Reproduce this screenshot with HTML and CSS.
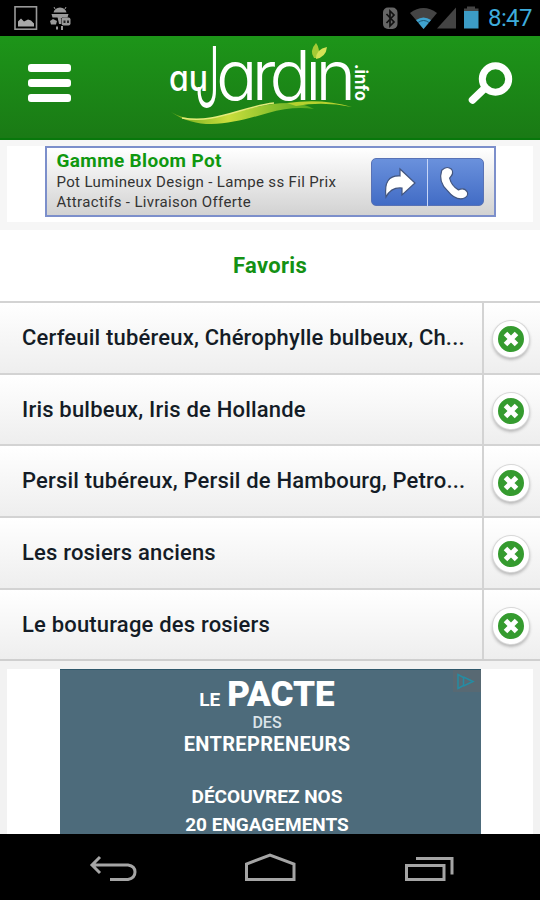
FILE: index.html
```html
<!DOCTYPE html>
<html lang="fr">
<head>
  <meta charset="UTF-8" />
  <meta name="viewport" content="width=device-width, initial-scale=1.0"/>
  <title>Favoris - auJardin.info</title>
  <link rel="stylesheet" href="styles.css">
</head>
<body>
  <div class="status-bar">
    <svg class="status-left" width="72" height="36" viewBox="0 0 72 36">
      <rect x="15" y="6.8" width="21.5" height="22.4" fill="none" stroke="#999" stroke-width="1.6"/>
      <path d="M18 26.500v-5l3-3 3 3 4-2 3 1 3 3v3z" fill="#aaa"/>
      <g fill="#999">
        <path d="M53.500 12.500q1-4.500 6.500-5 5.500 .5 6.500 5z"/>
        <path d="M51.500 14h17l-1 3.500h-5l-4 3-1-3h-5z"/>
        <path d="M55 9l-1-2M65 9l1-2" stroke="#999"/>
        <rect x="61.500" y="17.500" width="9" height="8" rx="2"/>
        <path d="M50 21l3-2 4 2-1 3.500h-5zM58 19h3v5h-2zM56 26.500h2v3h-2zM61 26h2v4h-2z"/>
      </g>
      <path d="M63.500 20.500h2V23h-2zM67 20.500h2V23h-2z" fill="#222"/>
    </svg>
    <svg class="status-right" width="104" height="36" viewBox="382 0 104 36">
      <rect x="383" y="7.500" width="14.500" height="21.500" rx="5" fill="#666"/>
      <path d="M386.500 14l7.500 8-4 4V11l4 4-7.500 8" fill="none" stroke="#111" stroke-width="1.700"/>
      <path d="M410 13q13.500-10 27 0l-13.300 16z" fill="#444"/>
      <path d="M416 20q7.500-5 15 0l-7.500 9z" fill="#3fa3cf"/>
      <path d="M418 22.500q5.500-4 11 0" fill="none" stroke="#1c5875" stroke-width="1"/>
      <path d="M456 7.500V28.500H437z" fill="#444"/>
      <path d="M464 11V8.500h3V6.500h8v2h3.500V11z" fill="#444"/>
      <rect x="464" y="11" width="14.500" height="17.500" fill="#3c9cc6"/>
    </svg>
    <span class="clock">8:47</span>
  </div>

  <header class="header">
    <div class="menu-button"><span></span><span></span><span></span></div>
    <svg class="logo" width="204" height="96" viewBox="168 40 204 96">
      <defs>
        <linearGradient id="swoosh" x1="0" x2="1">
          <stop offset="0" stop-color="#6aa71b"/>
          <stop offset=".4" stop-color="#cade3c"/>
          <stop offset="1" stop-color="#4fa71f"/>
        </linearGradient>
      </defs>
      <g class="logo-text">
        <text class="logo-au" x="170" y="92" textLength="39" lengthAdjust="spacingAndGlyphs">au</text>
        <text class="logo-j" x="196" y="108" textLength="25" lengthAdjust="spacingAndGlyphs">J</text>
        <text class="logo-name" x="217" y="100.500" textLength="140" lengthAdjust="spacing">ardın</text>
        <text class="logo-info" transform="translate(355.500 65) rotate(90)" textLength="37" lengthAdjust="spacingAndGlyphs">.info</text>
      </g>
      <path d="M315 59q-5-7 2-15 4 5 3 15z" fill="#a4cb35"/>
      <path d="M317 60q0-10 11-12-1 10-11 12z" fill="#d5e256"/>
      <path d="M172 113q18 11 45 5c24-5 49-15 77-14q12 1 21 6-22-3-46 4c-32 9-67 20-97-1z" fill="url(#swoosh)"/>
      <path d="M183 119c34 6 58-11 92-15" fill="none" stroke="#e4ec7a" stroke-width="1.500"/>
      <path d="M288 104q35-5 65 4-29-6-56-1z" fill="#b5d12f"/>
    </svg>
    <svg class="search" width="48" height="48" viewBox="466 59 48 48">
      <circle cx="495.500" cy="79" r="13.200" fill="none" stroke="#fff" stroke-width="7"/>
      <path d="M485 88L472.500 100" stroke="#fff" stroke-width="7.500" stroke-linecap="round"/>
    </svg>
  </header>

  <section class="top-ad">
    <div class="top-ad-inner">
      <div class="text-ad">
        <div class="text-ad-copy">
          <div class="text-ad-title">Gamme Bloom Pot</div>
          <div class="text-ad-line">Pot Lumineux Design - Lampe ss Fil Prix</div>
          <div class="text-ad-line">Attractifs - Livraison Offerte</div>
        </div>
        <div class="text-ad-buttons">
          <svg width="55" height="48" viewBox="0 0 55 48">
            <path d="M14 38q-3-22 14-21v-7l15 14-13 12v-7q-11-1-16 9z" fill="#fff" stroke="#42557f" stroke-width="1.200"/>
          </svg>
          <svg width="55" height="48" viewBox="0 0 55 48">
            <path d="M14 11q5-5 10-1 3 4-2 9 2 8 9 12 6-3 9 2 2 5-5 7-8 1-15-8-10-9-6-21z" fill="#fff" stroke="#42557f" stroke-width="1.200"/>
          </svg>
        </div>
      </div>
    </div>
  </section>

  <h1 class="title">Favoris</h1>

  <ul class="favorites">
    <li class="favorite">
      <span class="favorite-name">Cerfeuil tubéreux, Chérophylle bulbeux, Ch...</span>
      <span class="remove"><svg width="26" height="26" viewBox="0 0 26 26"><path d="M7.500 7.500l11 11M18.500 7.500l-11 11"/></svg></span>
    </li>
    <li class="favorite">
      <span class="favorite-name">Iris bulbeux, Iris de Hollande</span>
      <span class="remove"><svg width="26" height="26" viewBox="0 0 26 26"><path d="M7.500 7.500l11 11M18.500 7.500l-11 11"/></svg></span>
    </li>
    <li class="favorite">
      <span class="favorite-name">Persil tubéreux, Persil de Hambourg, Petro...</span>
      <span class="remove"><svg width="26" height="26" viewBox="0 0 26 26"><path d="M7.500 7.500l11 11M18.500 7.500l-11 11"/></svg></span>
    </li>
    <li class="favorite">
      <span class="favorite-name">Les rosiers anciens</span>
      <span class="remove"><svg width="26" height="26" viewBox="0 0 26 26"><path d="M7.500 7.500l11 11M18.500 7.500l-11 11"/></svg></span>
    </li>
    <li class="favorite">
      <span class="favorite-name">Le bouturage des rosiers</span>
      <span class="remove"><svg width="26" height="26" viewBox="0 0 26 26"><path d="M7.500 7.500l11 11M18.500 7.500l-11 11"/></svg></span>
    </li>
  </ul>

  <section class="bottom-ad">
    <div class="bottom-ad-inner">
      <div class="banner">
        <div class="banner-main"><span class="banner-le">LE</span><span class="banner-pacte">PACTE</span></div>
        <div class="banner-des">DES</div>
        <div class="banner-ent">ENTREPRENEURS</div>
        <div class="banner-more">DÉCOUVREZ NOS</div>
        <div class="banner-more">20 ENGAGEMENTS</div>
        <svg class="ad-choices" width="28" height="22" viewBox="0 0 28 22">
          <path d="M5 4.500v14l5.500-3V7.500zM10.500 7L20 11.500 10.500 16" fill="none" stroke="#258ca3" stroke-width="1.500"/>
        </svg>
      </div>
    </div>
  </section>

  <nav class="nav-bar">
    <svg width="540" height="66" viewBox="0 834 540 66" fill="none" stroke="#a5a5a5" stroke-width="3">
      <path d="M100 857l-8 8 8 8M92 865h36q7 1 7 7t-7 7.500h-18"/>
      <path d="M246.500 879.500v-15.500l23.500-9 24 9v15.500z"/>
      <path d="M406.500 865.500h37.500v14h-37.500zM416 858.500h36v16"/>
    </svg>
  </nav>
</body>
</html>
```

FILE: styles.css
```css
* {
  box-sizing: border-box;
}

body {
  margin: 0;
  width: 540px;
  height: 900px;
  overflow: hidden;
  display: flex;
  flex-direction: column;
  font-family: Roboto, "Liberation Sans", sans-serif;
  background: #f2f2f2;
}

svg {
  display: block;
}

.status-bar {
  height: 36px;
  flex: none;
  display: flex;
  align-items: center;
  background: #000;
}

.status-right {
  margin-left: auto;
}

.clock {
  width: 54px;
  padding-left: 2px;
  font-size: 24px;
  line-height: 36px;
  color: #3eacdc;
  letter-spacing: -0.6px;
}

.header {
  height: 104px;
  flex: none;
  display: flex;
  align-items: center;
  justify-content: space-between;
  padding: 0 26px 0 28px;
  background: linear-gradient(#1d9519, #1a7a15);
  border-bottom: 2px solid #08780b;
}

.menu-button {
  width: 43px;
  margin-top: -8px;
  display: flex;
  flex-direction: column;
  gap: 7px;
}

.menu-button span {
  height: 8px;
  border-radius: 3px;
  background: #fff;
}

.logo {
  margin-left: 71px;
  margin-right: 70px;
  overflow: visible;
}

.logo-text {
  fill: #fff;
  font-family: Inter, Lato, sans-serif;
  font-feature-settings: "cv11";
}

.logo-au {
  font-size: 36px;
  font-weight: 500;
}

.logo-j {
  font-size: 84px;
  font-weight: 300;
}

.logo-name {
  font-size: 69px;
  font-weight: 300;
}

.logo-info {
  font-size: 17px;
  font-weight: 700;
}

.search {
  margin-top: -8px;
}

.top-ad {
  height: 90px;
  flex: none;
  padding: 6px 7px 8px;
  background: #f6f6f6;
}

.top-ad-inner {
  height: 76px;
  display: flex;
  justify-content: center;
  background: #fff;
}

.text-ad {
  width: 451px;
  height: 71px;
  display: flex;
  justify-content: space-between;
  padding: 0 10px;
  border: 2px solid #7c8fcb;
  background: linear-gradient(#fff, #d2d2d2);
}

.text-ad-copy {
  padding-top: 1px;
  white-space: nowrap;
}

.text-ad-title {
  font-size: 19px;
  line-height: 24px;
  font-weight: 700;
  letter-spacing: 0.35px;
  color: #0f980f;
}

.text-ad-line {
  font-size: 15px;
  line-height: 19.500px;
  letter-spacing: 0.35px;
  color: #333;
}

.text-ad-buttons {
  width: 113px;
  height: 48px;
  margin-top: 10px;
  display: flex;
  border-radius: 5px;
  border: 1px solid #5872b5;
  background: linear-gradient(#6a91dc, #426cc5);
}

.text-ad-buttons svg + svg {
  border-left: 1px solid #c7d6f8;
}

.title {
  height: 71px;
  flex: none;
  margin: 0;
  display: flex;
  align-items: center;
  justify-content: center;
  background: #fff;
  color: #149114;
  font-size: 22px;
  line-height: 26px;
  font-weight: 700;
  letter-spacing: 0.3px;
}

.favorites {
  height: 360px;
  flex: none;
  margin: 0;
  padding: 0;
  list-style: none;
  border-bottom: 2px solid #cfcfcf;
}

.favorite {
  height: 71.700px;
  display: flex;
  border-top: 2px solid #d3d3d3;
  background: linear-gradient(#fff, #eee);
}

.favorite-name {
  width: 482px;
  padding: 0 0 1px 22px;
  display: flex;
  align-items: center;
  white-space: nowrap;
  font-size: 22px;
  font-weight: 500;
  letter-spacing: 0.19px;
  color: #141c26;
}

.remove {
  flex: 1;
  display: flex;
  align-items: center;
  justify-content: center;
  padding: 3px 3px 0 0;
  border-left: 2px solid #d3d3d3;
}

.remove svg {
  box-sizing: content-box;
  border: 5px solid #fff;
  border-radius: 50%;
  background: #359b2f;
  box-shadow: 0 0 0 1px #d8d8d8, 0 2px 3px 1px #bbb;
}

.remove path {
  stroke: #fff;
  stroke-width: 5px;
}

.bottom-ad {
  height: 173px;
  flex: none;
  padding: 8px 7px 0;
}

.bottom-ad-inner {
  height: 165px;
  display: flex;
  justify-content: center;
  background: #fff;
}

.banner {
  position: relative;
  width: 421px;
  height: 165px;
  padding-right: 6px;
  background: #4d6b7b;
  border-top: 1px solid #2f586b;
  color: #fff;
  text-align: center;
  font-weight: 700;
}

.banner-main {
  height: 43px;
  display: flex;
  justify-content: center;
  align-items: baseline;
  gap: 7px;
}

.banner-le {
  font-size: 19px;
}

.banner-pacte {
  font-size: 35px;
  line-height: 49px;
  font-weight: 900;
}

.banner-des {
  height: 20px;
  font-size: 16px;
  line-height: 20px;
  font-weight: 500;
  color: #dbe4ea;
}

.banner-ent {
  height: 44px;
  font-size: 20px;
  line-height: 22px;
  letter-spacing: 0.35px;
}

.banner-more {
  height: 28px;
  font-size: 19px;
  line-height: 39px;
}

.banner-more + .banner-more {
  height: 34px;
}

.ad-choices {
  position: absolute;
  top: 0;
  right: 0;
  background: #586973;
}

.nav-bar {
  flex: 1;
  background: #000;
}
```
